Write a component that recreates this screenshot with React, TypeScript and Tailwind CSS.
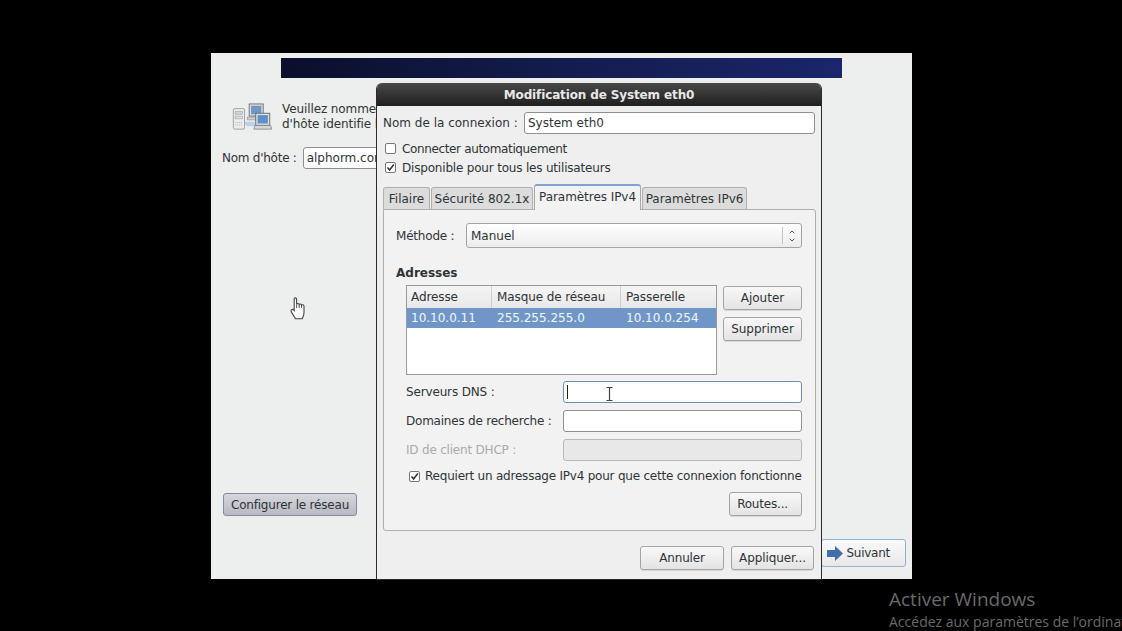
import { ChevronDown, ChevronUp } from 'lucide-react';

const btn =
    'flex items-center justify-center rounded-[3px] border border-[#a4a4a4] bg-gradient-to-b from-[#f8f8f8] to-[#e4e4e4] text-[#2e3436] shadow-[0_1px_0_#d8d8d8]';
const field = 'h-[22px] rounded-[3px] border border-[#8f8f8f] bg-white';

function Check({ checked }: { checked?: boolean }) {
    return (
        <span className="flex h-[11px] w-[11px] shrink-0 items-center justify-center rounded-[2px] border border-[#777] bg-white">
            {checked && (
                <svg width="9" height="9" viewBox="0 0 9 9">
                    <path d="M1.5 4.5 L3.6 7 L7.8 1.5" fill="none" stroke="#333" strokeWidth="1.5" />
                </svg>
            )}
        </span>
    );
}

function NetworkIcon() {
    return (
        <svg width="40" height="28" viewBox="0 0 42 30" className="shrink-0">
            <path d="M10 20 H24 V25 H16 Z" fill="#bcd2ec" />
            <rect x="1" y="6" width="12" height="22" rx="1.5" fill="#ececec" stroke="#9a9fa1" />
            <rect x="3" y="9" width="8" height="3" fill="#d2d4d4" stroke="#9a9fa1" strokeWidth="0.6" />
            <rect x="3" y="14" width="8" height="3" fill="#dcdede" stroke="#9a9fa1" strokeWidth="0.6" />
            <path d="M3 21 H11 M3 23.5 H11" stroke="#aaa" strokeDasharray="1 1" />
            <rect x="18" y="1" width="15" height="13" fill="#d9dbdb" stroke="#6c7477" />
            <rect x="20" y="3" width="11" height="9" fill="#7297c6" />
            <path d="M16 15 H30 L31 18 H16 Z" fill="#cfd2d2" stroke="#888" strokeWidth="0.7" />
            <rect x="25" y="11" width="15" height="13" fill="#dfe1e1" stroke="#646c6f" />
            <rect x="27" y="13" width="11" height="9" fill="#5f8fc8" />
            <path d="M24 24 H41 L42 28 H23 Z" fill="#d6d8d8" stroke="#777d7f" strokeWidth="0.8" />
        </svg>
    );
}

function HandCursor() {
    return (
        <svg width="16" height="23" viewBox="0 0 16 23" className="absolute left-[290px] top-[297px]">
            <path
                d="M4.2 11.5 V2.2 C4.2 0.4 6.6 0.4 6.6 2.2 V7.4 C7 6.2 9 6.2 9.2 7.6 C9.6 6.6 11.4 6.8 11.6 8.2 C12 7.4 14 7.6 14 9.2 V15.5 C14 18.5 12.8 19.5 12.2 21.8 H5.4 C4.6 19.6 1 15.4 1 13.8 C1 12.2 2.8 11.8 4.2 13.6 Z"
                fill="#fff"
                stroke="#444"
                strokeWidth="1.1"
            />
            <path d="M6.6 7.4 V11 M9.2 7.6 V11 M11.6 8.2 V11" stroke="#444" strokeWidth="0.9" />
        </svg>
    );
}

function Tab({ label, active, w }: { label: string; active?: boolean; w: string }) {
    if (active) {
        return (
            <div
                className={`${w} z-10 -mb-px flex h-[26px] items-start justify-center rounded-t-[3px] border border-b-0 border-[#a8a8a8] border-t-2 border-t-[#7ea3cf] bg-[#f2f2f2] pt-[2px] tracking-[-0.05px]`}
            >
                {label}
            </div>
        );
    }
    return (
        <div
            className={`${w} flex h-[22px] items-center justify-center rounded-t-[3px] border border-b-0 border-[#b0b0b0] bg-[#dcdcdc]`}
        >
            {label}
        </div>
    );
}

function Dialog() {
    return (
        <div className="absolute left-[376px] top-[83px] flex h-[497px] w-[446px] flex-col overflow-hidden rounded-t-[6px] border-x border-b border-[#2b2b2b] bg-[#efefef] text-[12px] text-[#2e3436]">
            <div className="flex h-[23px] shrink-0 items-center justify-center bg-gradient-to-b from-[#4a4a4a] to-[#1f1f1f] text-[12px] font-bold tracking-[-0.13px] text-[#e8e8e8]">
                Modification de System eth0
            </div>
            <div className="flex flex-col pl-[6px] pr-[5px] pt-[6px]">
                <div className="flex items-center">
                    <span className="w-[141px]">Nom de la connexion :</span>
                    <div className={`${field} flex w-[291px] items-center pl-[3px]`}>System eth0</div>
                </div>
                <div className="mt-[6px] flex h-[17px] items-center gap-[6px] pl-[2px] tracking-[-0.36px]">
                    <Check />
                    Connecter automatiquement
                </div>
                <div className="mt-[2px] flex h-[17px] items-center gap-[6px] pl-[2px] tracking-[-0.19px]">
                    <Check checked />
                    Disponible pour tous les utilisateurs
                </div>
                <div className="mt-[8px] flex h-[25px] items-end gap-px">
                    <Tab label="Filaire" w="w-[47px]" />
                    <Tab label="Sécurité 802.1x" w="w-[102px]" />
                    <Tab label="Paramètres IPv4" w="w-[107px]" active />
                    <Tab label="Paramètres IPv6" w="w-[105px]" />
                </div>
                <div className="flex h-[322px] w-[433px] flex-col rounded-b-[3px] rounded-tr-[3px] border border-[#aeaeae] bg-[#f2f2f2] pl-[12px] pr-[13px] pt-[13px]">
                    <div className="flex items-center">
                        <span className="w-[70px] tracking-[-0.2px]">Méthode :</span>
                        <div className="flex h-[25px] w-[336px] items-center rounded-[3px] border border-[#a4a4a4] bg-gradient-to-b from-white to-[#ececec] pl-[4px]">
                            <span className="flex-1">Manuel</span>
                            <span className="flex h-[17px] w-[19px] flex-col items-center justify-center border-l border-[#c4c4c4]">
                                <ChevronUp size={8} strokeWidth={2.5} />
                                <ChevronDown size={8} strokeWidth={2.5} />
                            </span>
                        </div>
                    </div>
                    <div className="mt-[17px] font-bold leading-[17px]">Adresses</div>
                    <div className="mt-[3px] flex gap-[6px] pl-[10px]">
                        <div className="h-[90px] w-[311px] border border-[#9a9a9a] bg-white">
                            <div className="flex h-[22px] bg-gradient-to-b from-[#f5f5f5] to-[#e8e8e8] tracking-[-0.1px]">
                                <span className="flex w-[85px] items-center border-r border-[#cfcfcf] pl-[4px]">Adresse</span>
                                <span className="flex w-[129px] items-center border-r border-[#cfcfcf] pl-[5px]">Masque de réseau</span>
                                <span className="flex items-center pl-[5px]">Passerelle</span>
                            </div>
                            <div className="flex h-[20px] items-center bg-[#7096c8] text-[#f2f6fb]">
                                <span className="w-[85px] pl-[4px]">10.10.0.11</span>
                                <span className="w-[129px] pl-[5px]">255.255.255.0</span>
                                <span className="pl-[5px]">10.10.0.254</span>
                            </div>
                        </div>
                        <div className="flex flex-col gap-[7px] pt-px">
                            <div className={`${btn} h-[24px] w-[79px]`}>Ajouter</div>
                            <div className={`${btn} h-[24px] w-[79px]`}>Supprimer</div>
                        </div>
                    </div>
                    <div className="mt-[6px] flex flex-col gap-[7px] pl-[10px]">
                        <div className="flex items-center">
                            <span className="w-[157px] tracking-[-0.15px]">Serveurs DNS :</span>
                            <div className="flex h-[22px] w-[239px] items-center rounded-[3px] border border-[#6e8fb8] bg-white pl-[3px]">
                                <span className="h-[14px] w-px bg-[#222]" />
                            </div>
                        </div>
                        <div className="flex items-center">
                            <span className="w-[157px] tracking-[-0.22px]">Domaines de recherche :</span>
                            <div className={`${field} w-[239px]`} />
                        </div>
                        <div className="flex items-center">
                            <span className="w-[157px] tracking-[-0.2px] text-[#a9abab]">ID de client DHCP :</span>
                            <div className="h-[22px] w-[239px] rounded-[3px] border border-[#b8b8b8] bg-[#e8e8e8]" />
                        </div>
                    </div>
                    <div className="mt-[6px] flex h-[18px] items-center gap-[5px] pl-[13px] tracking-[-0.22px]">
                        <Check checked />
                        <span className="whitespace-nowrap">Requiert un adressage IPv4 pour que cette connexion fonctionne</span>
                    </div>
                    <div className="mt-[7px] flex justify-end">
                        <div className={`${btn} h-[24px] w-[73px] pr-[6px] tracking-[-0.2px]`}>Routes...</div>
                    </div>
                </div>
                <div className="mt-[15px] flex justify-end gap-[7px] pr-[2px]">
                    <div className={`${btn} h-[24px] w-[84px] tracking-[-0.2px]`}>Annuler</div>
                    <div className={`${btn} h-[24px] w-[83px] tracking-[-0.1px]`}>Appliquer...</div>
                </div>
            </div>
        </div>
    );
}

export default function App() {
    return (
        <div
            className="relative h-[631px] w-[1122px] overflow-hidden bg-black pl-[211px] pt-[53px]"
            style={{ fontFamily: '"DejaVu Sans", sans-serif' }}
        >
            <div className="flex h-[526px] w-[701px] flex-col bg-[#edeeee] text-[12px] text-[#2e3436]">
                <div className="ml-[70px] mt-[5px] h-[20px] w-[561px] shrink-0 bg-gradient-to-r from-[#0b0f2c] via-[#131c4d] to-[#1a256c]" />
                <div className="ml-[21px] mt-[24px] flex items-center gap-[10px] leading-[15px]">
                    <NetworkIcon />
                    <div className="whitespace-nowrap tracking-[-0.1px]">
                        <div>Veuillez nommer</div>
                        <div>d'hôte identifie l</div>
                    </div>
                </div>
                <div className="ml-[11px] mt-[15px] flex items-center gap-[6px]">
                    <span className="tracking-[-0.25px]">Nom d'hôte :</span>
                    <div className={`${field} w-[100px] overflow-hidden pl-[3px] leading-[20px]`}>alphorm.com</div>
                </div>
                <div className="flex-1" />
                <div className="ml-[12px] flex h-[23px] w-[134px] items-center justify-center rounded-[3px] border border-[#8489a8] bg-gradient-to-b from-[#d6d6dc] to-[#b9b9c2] tracking-[-0.2px]">
                    Configurer le réseau
                </div>
                <div className="mb-[12px] mr-[6px] mt-[23px] flex justify-end">
                    <div className="flex h-[28px] w-[85px] items-center justify-end gap-[3px] rounded-[3px] border border-[#8fb0d8] bg-gradient-to-b from-[#fafafa] to-[#e8e8e8] pr-[15px] tracking-[-0.25px]">
                        <svg width="16" height="15" viewBox="0 0 16 15">
                            <path d="M0 4 H8 V0 L16 7.5 L8 15 V11 H0 Z" fill="#3f6ea8" />
                        </svg>
                        Suivant
                    </div>
                </div>
            </div>
            <Dialog />
            <HandCursor />
            <svg width="7" height="14" viewBox="0 0 7 14" className="absolute left-[606px] top-[387px]">
                <path d="M0.5 0.5 H6.5 M3.5 0.5 V13.5 M0.5 13.5 H6.5" fill="none" stroke="#444" strokeWidth="1.2" />
            </svg>
            <div
                className="absolute left-[889px] top-[587px] whitespace-nowrap text-[#6a6a6a]"
                style={{ fontFamily: '"Open Sans", sans-serif' }}
            >
                <div className="text-[19px] leading-[25px]">Activer Windows</div>
                <div className="text-[14px] leading-[19px]">Accédez aux paramètres de l’ordinateur</div>
            </div>
        </div>
    );
}
